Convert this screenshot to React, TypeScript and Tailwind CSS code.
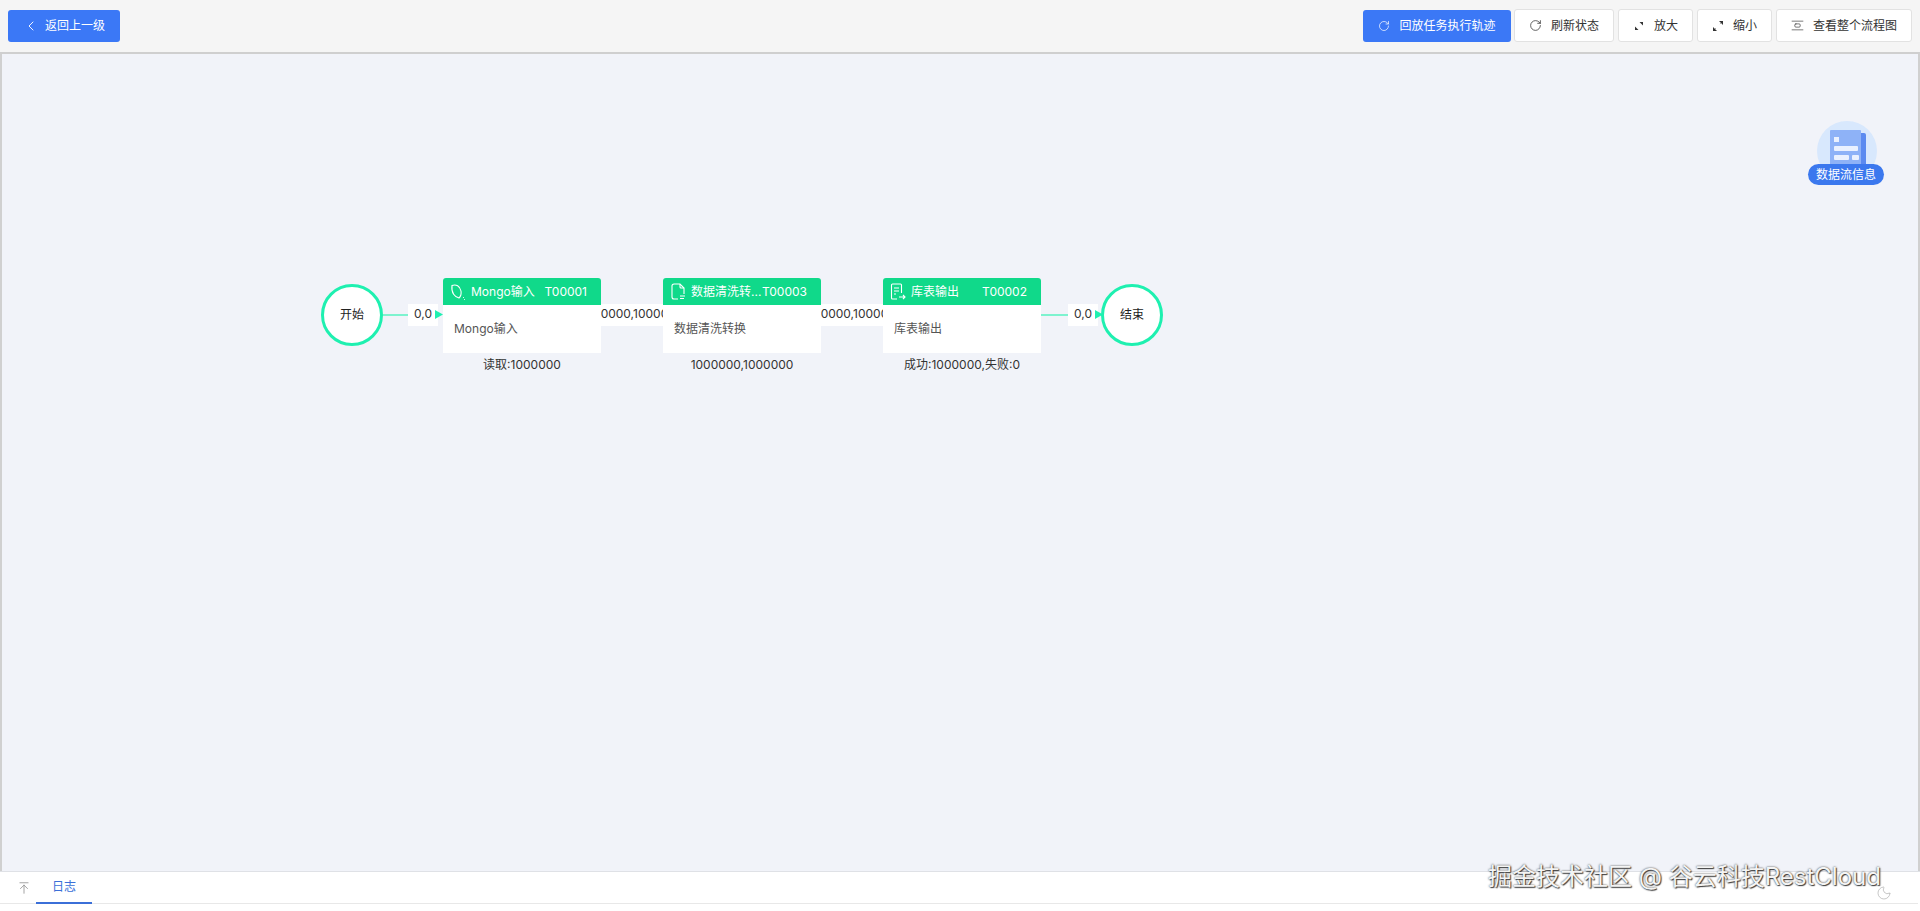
import React from 'react';
import { ChevronLeft, RotateCw, AlignVerticalSpaceAround, ArrowUpToLine, Moon } from 'lucide-react';

const font = { fontFamily: '"Inter", "Noto Sans CJK SC", sans-serif' };

const LeafIcon = () => (
  <svg width="16" height="18" viewBox="0 0 16 18" fill="none" stroke="white" strokeWidth="1.1">
    <path d="M2 2.5 C6 1 10 3 11 8 C11.5 11 10.5 13.5 9 15 C5 14 1 10 2 2.5Z" />
    <path d="M13 14.5h.8M14 16.5h.8" />
  </svg>
);

const FileIcon = () => (
  <svg width="16" height="18" viewBox="0 0 16 18" fill="none" stroke="white" strokeWidth="1.1">
    <path d="M8 16H4a2 2 0 0 1-2-2V3a2 2 0 0 1 2-2h6l4 4v6" />
    <path d="M10 1v3a1 1 0 0 0 1 1h3M10 13h5M10 15.5h4" />
  </svg>
);

const TableIcon = () => (
  <svg width="16" height="18" viewBox="0 0 16 18" fill="none" stroke="white" strokeWidth="1.1">
    <path d="M7 16H2.5a1 1 0 0 1-1-1V2a1 1 0 0 1 1-1h8a1 1 0 0 1 1 1v8" />
    <path d="M4 5h5M4 8h5M4 11h2M9 14h6M13 12l2 2-2 2" />
  </svg>
);

const ExpandIcon = ({ flip }: { flip?: boolean }) => (
  <svg width="12" height="12" viewBox="0 0 12 12" fill="#333">
    {flip ? (
      <>
        <path d="M7 1h4v4z" />
        <path d="M1 11V7l4 4z" />
        <path d="M3 9l6-6" stroke="#333" strokeWidth="0.6" strokeDasharray="1 6" />
      </>
    ) : (
      <>
        <path d="M10 2v3.5L6.5 2z" />
        <path d="M2 10V6.500l3.500 3.500z" />
      </>
    )}
  </svg>
);

const Circle = ({ label, x }: { label: string; x: string }) => (
  <div className={`absolute top-[230px] ${x} flex h-[62px] w-[62px] items-center justify-center rounded-full border-[3px] border-[#1ef0b0] bg-white text-[12px] text-[#222]`}>
    {label}
  </div>
);

const EdgeLabel = ({ x, w, text }: { x: string; w: string; text: string }) => (
  <div className={`absolute top-[250px] ${x} ${w} h-[22px] bg-white text-center text-[12px] leading-[20px] text-[#333]`}>
    {text}
  </div>
);

const Line = ({ x, w }: { x: string; w: string }) => (
  <div className={`absolute top-[260px] ${x} ${w} h-[2px] bg-[#7df3cf]`} />
);

const Arrow = ({ x }: { x: string }) => (
  <svg className={`absolute top-[256px] ${x}`} width="8" height="9" viewBox="0 0 8 9" fill="#1ef0b0">
    <path d="M0 0l8 4.500-8 4.500z" />
  </svg>
);

const TaskNode = ({
  x,
  icon,
  title,
  code,
  body,
  foot,
  footX,
}: {
  x: string;
  icon: React.ReactNode;
  title: string;
  code: string;
  body: string;
  foot: string;
  footX: string;
}) => (
  <div className={`absolute top-[224px] ${x} w-[158px]`}>
    <div className="flex h-[27px] items-center justify-between rounded-t-[3px] bg-[#10d98a] pl-[7px] pr-[14px] text-[12px] text-white">
      <div className="flex items-center gap-[5px]">
        {icon}
        <span>{title}</span>
      </div>
      <span>{code}</span>
    </div>
    <div className="flex h-[48px] items-center bg-white pl-[11px] text-[12px] text-[#555]">{body}</div>
    <div className={`mt-[3px] text-center text-[12px] leading-[18px] text-[#333] ${footX}`}>{foot}</div>
  </div>
);

const ToolButton = ({ icon, label, w }: { icon: React.ReactNode; label: string; w: string }) => (
  <button className={`flex h-[33px] ${w} items-center justify-center gap-[9px] rounded-[3px] border border-[#e2e2e2] bg-white text-[12px] text-[#333]`}>
    {icon}
    <span>{label}</span>
  </button>
);

export default function App() {
  return (
    <div className="flex h-[911px] w-[1920px] flex-col overflow-hidden bg-[#f5f5f5]" style={font}>
      {/* Toolbar */}
      <div className="flex h-[52px] shrink-0 items-center justify-between pb-[1px] pl-2 pr-2">
        <button className="flex h-[32px] w-[112px] items-center justify-center gap-[6px] rounded-[3px] bg-[#3b78f6] text-[12px] text-white">
          <ChevronLeft size={16} strokeWidth={1.4} />
          <span>返回上一级</span>
        </button>
        <div className="flex items-center">
          <button className="mr-[3px] flex h-[32px] w-[148px] items-center justify-center gap-[9px] rounded-[3px] bg-[#3b78f6] text-[12px] text-white">
            <RotateCw size={12} strokeWidth={1.4} />
            <span>回放任务执行轨迹</span>
          </button>
          <div className="flex items-center gap-[4px]">
            <ToolButton w="w-[100px]" icon={<RotateCw size={13} strokeWidth={1.4} />} label="刷新状态" />
            <ToolButton w="w-[75px]" icon={<ExpandIcon />} label="放大" />
            <ToolButton w="w-[75px]" icon={<ExpandIcon flip />} label="缩小" />
            <ToolButton w="w-[136px]" icon={<AlignVerticalSpaceAround size={13} strokeWidth={1.2} />} label="查看整个流程图" />
          </div>
        </div>
      </div>

      {/* Canvas */}
      <div className="relative flex-1 border-x-2 border-t-2 border-x-[#d0d0d0] border-t-[#cfcfcf] bg-[#f1f3f9]">
        <Line x="left-[381px]" w="w-[30px]" />
        <Line x="left-[1039px]" w="w-[30px]" />
        <EdgeLabel x="left-[406px]" w="w-[30px]" text="0,0" />
        <EdgeLabel x="left-[1066px]" w="w-[30px]" text="0,0" />
        <Arrow x="left-[433px]" />
        <Arrow x="left-[1093px]" />
        <EdgeLabel x="left-[570px]" w="w-[120px]" text="1000000,1000000" />
        <EdgeLabel x="left-[790px]" w="w-[120px]" text="1000000,1000000" />

        <Circle x="left-[319px]" label="开始" />
        <Circle x="left-[1099px]" label="结束" />

        <TaskNode x="left-[441px]" icon={<LeafIcon />} title="Mongo输入" code="T00001" body="Mongo输入" foot="读取:1000000" footX="" />
        <TaskNode x="left-[661px]" icon={<FileIcon />} title="数据清洗转..." code="T00003" body="数据清洗转换" foot="1000000,1000000" footX="" />
        <TaskNode x="left-[881px]" icon={<TableIcon />} title="库表输出" code="T00002" body="库表输出" foot="成功:1000000,失败:0" footX="" />

        {/* Data flow info badge */}
        <div className="absolute left-[1806px] top-[67px] h-[68px] w-[80px]">
          <div className="absolute left-[9px] top-0 h-[60px] w-[60px] rounded-full bg-[#d8e8fd]" />
          <svg className="absolute left-[22px] top-[9px]" width="38" height="44" viewBox="0 0 38 44">
            <rect x="4" y="3" width="32" height="40" rx="2" fill="#5b8af0" />
            <rect x="0" y="0" width="31" height="44" rx="1" fill="#8eb2f7" />
            <rect x="4" y="7" width="5" height="5" fill="#eaf1ff" />
            <rect x="4" y="16" width="24" height="5" rx="1" fill="#eaf1ff" />
            <rect x="4" y="25" width="15" height="5" rx="1" fill="#eaf1ff" />
            <rect x="22" y="25" width="7" height="5" rx="1" fill="#eaf1ff" />
          </svg>
          <div className="absolute left-0 top-[43px] flex h-[21px] w-[76px] items-center justify-center rounded-full bg-[#3b78ee] text-[12px] text-white">
            数据流信息
          </div>
        </div>
      </div>

      {/* Bottom tabs */}
      <div className="relative h-[40px] shrink-0 border-t border-[#dfe1e6] bg-white">
        <div className="flex h-[32px] items-stretch border-b border-[#e8e8e8] pl-[12px] mr-[2px]">
          <div className="flex w-[24px] items-center justify-center text-[#888]">
            <ArrowUpToLine size={14} strokeWidth={1.3} />
          </div>
          <div className="-mb-px ml-[0px] flex w-[56px] items-center justify-center border-b-2 border-[#3b6fd8] text-[12px] text-[#3b6fd8]">
            日志
          </div>
        </div>
        <Moon className="absolute left-[1876px] top-[13px] text-[#aaa]" size={16} strokeWidth={1} />
        <div className="absolute left-[1488px] top-[-11px] text-[24px] leading-[32px] tracking-[0px] text-[#f4f4f4] [text-shadow:0_0_2px_#333,1px_1px_1px_#444]">
          掘金技术社区 @ 谷云科技RestCloud
        </div>
      </div>
    </div>
  );
}
